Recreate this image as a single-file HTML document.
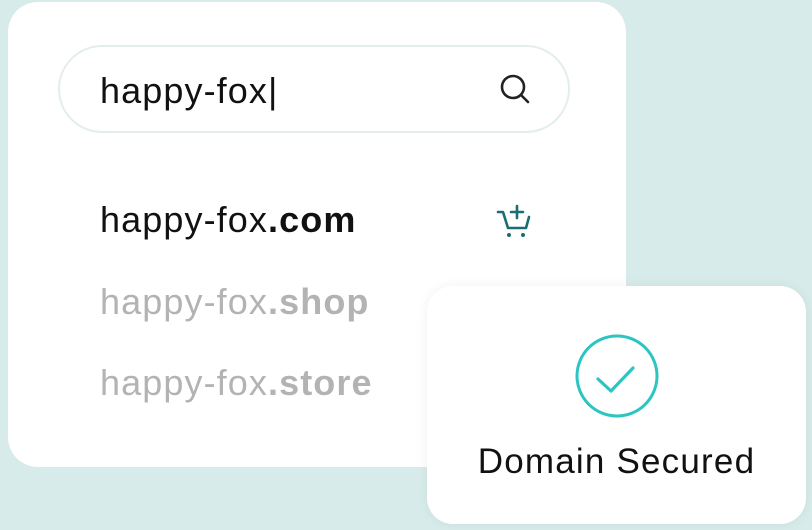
<!DOCTYPE html>
<html><head><style>
html,body{margin:0;padding:0}
body{width:812px;height:530px;background:#d7ebea;position:relative;overflow:hidden;font-family:"Liberation Sans",sans-serif}
.card{position:absolute;left:8px;top:2px;width:618px;height:465px;background:#fff;border-radius:30px}
.pill{position:absolute;left:58px;top:45px;width:508px;height:84px;border:2px solid #e3eeec;border-radius:44px;background:#fff}
.t{position:absolute;left:100px;font-size:36px;white-space:nowrap;letter-spacing:1.1px}
.card2{position:absolute;left:427px;top:286px;width:379px;height:238px;background:#fff;border-radius:26px;box-shadow:0 0 12px rgba(0,0,0,0.06)}
</style></head><body>
<div class="card"></div>
<div class="pill"></div>
<div class="t" style="top:70px;color:#111">happy-fox<span style="font-weight:300">|</span></div>
<svg style="position:absolute;left:496px;top:70px" width="38" height="38" viewBox="0 0 38 38"><circle cx="17" cy="17" r="11" fill="none" stroke="#222" stroke-width="2.6"/><line x1="25" y1="25" x2="32" y2="32" stroke="#222" stroke-width="2.6" stroke-linecap="round"/></svg>
<div class="t" style="top:199px;color:#111">happy-fox<b>.com</b></div>
<div class="t" style="top:281px;color:#b3b3b3">happy-fox<b>.shop</b></div>
<div class="t" style="top:362px;color:#b3b3b3">happy-fox<b>.store</b></div>
<svg style="position:absolute;left:494px;top:202px" width="40" height="38" viewBox="0 0 40 38"><path d="M4 10 H9 L14 26 H32 L35 15" fill="none" stroke="#1c6d72" stroke-width="2.6" stroke-linecap="round" stroke-linejoin="round"/><path d="M23 4 V16 M17 10 H29" stroke="#1c6d72" stroke-width="2.6" stroke-linecap="round"/><circle cx="15" cy="33" r="2" fill="#1c6d72"/><circle cx="29" cy="33" r="2" fill="#1c6d72"/></svg>
<div class="card2"></div>
<svg style="position:absolute;left:575px;top:334px" width="84" height="84" viewBox="0 0 84 84"><circle cx="42" cy="42" r="40" fill="none" stroke="#2dc5c2" stroke-width="3"/><path d="M23 45 L36 57 L58 34" fill="none" stroke="#2dc5c2" stroke-width="3.2" stroke-linecap="round" stroke-linejoin="round"/></svg>
<div style="position:absolute;left:427px;width:379px;top:442px;text-align:center;font-size:35px;letter-spacing:1.2px;color:#111;white-space:nowrap">Domain Secured</div>
</body></html>
